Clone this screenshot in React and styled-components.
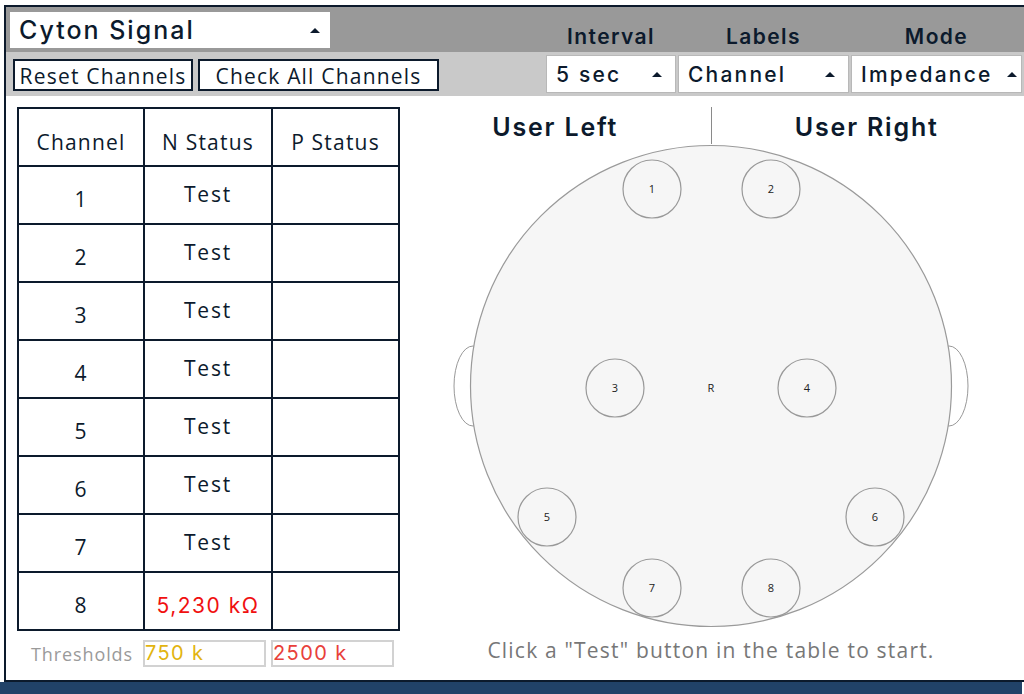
import React from 'react';
import styled, { createGlobalStyle } from 'styled-components';

const GlobalStyle = createGlobalStyle`
  html, body {
    margin: 0;
    padding: 0;
    background: #fff;
  }
  * { box-sizing: border-box; }
`;

const INK = '#0c1a2c';
const GEO = '"Inter", "Open Sans", sans-serif';
const HUMAN = '"Open Sans", "Noto Sans", sans-serif';

const Screen = styled.div`
  width: 1024px;
  height: 694px;
  padding: 5px 0 0 4px;
  display: flex;
  flex-direction: column;
  background: #fff;
  overflow: hidden;
`;

const Widget = styled.div`
  flex: 1;
  display: flex;
  flex-direction: column;
  border-top: 2px solid ${INK};
  border-left: 2px solid ${INK};
  border-bottom: 2px solid ${INK};
  min-height: 0;
`;

const BottomBar = styled.div`
  height: 12px;
  margin-left: -4px;
  width: 1022px;
  background: #214268;
`;

const TopBar = styled.div`
  height: 45px;
  background: #999999;
  display: flex;
  align-items: stretch;
  padding: 5px 2px 0 4px;
`;

const SubBar = styled.div`
  height: 44px;
  background: #c9c9c9;
  display: flex;
  align-items: flex-start;
  padding: 0 2px 0 7px;
`;

const MainSelect = styled.div`
  width: 320px;
  height: 36px;
  background: #fff;
  display: flex;
  align-items: center;
  justify-content: space-between;
  padding: 0 10px 0 9px;
  font-family: ${GEO};
  font-size: 25px;
  font-weight: 500;
  color: ${INK};
  letter-spacing: 2px;
`;

const Caret = styled.span`
  width: 0;
  height: 0;
  border-left: 5px solid transparent;
  border-right: 5px solid transparent;
  border-bottom: 5px solid ${INK};
  flex: none;
`;

const LabelRow = styled.div`
  margin-left: auto;
  display: flex;
  gap: 2px;
  align-items: flex-end;
  padding-bottom: 3px;
`;

const ColLabel = styled.div`
  width: ${p => p.$w}px;
  text-align: center;
  font-family: ${GEO};
  font-size: 21px;
  font-weight: 600;
  color: ${INK};
  letter-spacing: 1.4px;
`;

const ButtonRow = styled.div`
  display: flex;
  gap: 5px;
  margin-top: 7px;
`;

const Button = styled.div`
  height: 32px;
  width: ${p => p.$w}px;
  border: 2px solid ${INK};
  background: #fff;
  display: flex;
  align-items: center;
  justify-content: center;
  padding-top: 1px;
  font-family: ${HUMAN};
  font-size: 21px;
  color: ${INK};
  letter-spacing: 1.2px;
  white-space: nowrap;
`;

const SelectRow = styled.div`
  margin-left: auto;
  display: flex;
  gap: 2px;
  margin-top: 3px;
`;

const SmallSelect = styled.div`
  width: ${p => p.$w}px;
  height: 38px;
  background: #fff;
  border: 1px solid #b8b8b8;
  display: flex;
  align-items: center;
  justify-content: space-between;
  padding: 0 ${p => p.$pr ?? 13}px 0 9px;
  font-family: ${GEO};
  font-size: 21px;
  font-weight: 500;
  color: ${INK};
  letter-spacing: 2.2px;
`;

const Content = styled.div`
  flex: 1;
  display: flex;
  min-height: 0;
`;

const LeftPane = styled.div`
  padding: 11px 0 0 11px;
  width: 392px;
`;

const Table = styled.table`
  border-collapse: collapse;
  width: 381px;
  table-layout: fixed;
`;

const Cell = styled.td`
  border: 2px solid ${INK};
  height: 58px;
  padding: 0;
  text-align: center;
  vertical-align: middle;
  font-family: ${HUMAN};
  font-size: 21px;
  letter-spacing: 1.2px;
  color: ${p => (p.$alert ? '#f01010' : INK)};
  ${p => p.$alert && `font-family: ${GEO}; font-weight: 400; letter-spacing: 1.5px;`}
`;

const HeadCell = styled(Cell).attrs({ as: 'th' })`
  font-weight: 400;
  padding-top: 9px;
`;

const Num = styled.span`
  display: inline-block;
  transform: translateY(4px);
`;

const TestLabel = styled.span`
  display: inline-block;
  transform: translateY(-1px);
  letter-spacing: 1.8px;
`;

const ThresholdRow = styled.div`
  display: grid;
  grid-template-columns: 126px 128px 127px;
  align-items: center;
  margin-top: 9px;
`;

const ThresholdLabel = styled.div`
  font-family: ${HUMAN};
  font-size: 18px;
  color: #9a9a9a;
  text-align: right;
  padding-right: 10px;
  padding-top: 1px;
  letter-spacing: 0.9px;
`;

const ThresholdInput = styled.div`
  width: 123px;
  height: 27px;
  border: 2px solid #d2d2d2;
  font-family: ${GEO};
  font-size: 20px;
  line-height: 23px;
  letter-spacing: 1.4px;
  color: ${p => p.$color};
`;

const RightPane = styled.div`
  flex: 1;
  display: flex;
  flex-direction: column;
  align-items: center;
  padding-top: 11px;
`;

const SideHeader = styled.div`
  width: 622px;
  height: 37px;
  display: grid;
  grid-template-columns: 1fr 1px 1fr;
`;

const SideLabel = styled.div`
  font-family: ${GEO};
  font-size: 25px;
  font-weight: 600;
  color: ${INK};
  text-align: center;
  padding-top: 5px;
  letter-spacing: 1.8px;
`;

const Divider = styled.div`
  background: #8a8a8a;
`;

const HeadSvg = styled.svg`
  display: block;
  flex: none;
`;

const Hint = styled.div`
  margin-top: 6px;
  font-family: ${HUMAN};
  font-size: 21px;
  letter-spacing: 1.2px;
  color: #777;
`;

const electrodes = [
  { id: '1', x: -59, y: -197 },
  { id: '2', x: 60, y: -197 },
  { id: '3', x: -96, y: 2 },
  { id: '4', x: 96, y: 2 },
  { id: '5', x: -164, y: 131 },
  { id: '6', x: 164, y: 131 },
  { id: '7', x: -59, y: 202 },
  { id: '8', x: 60, y: 202 },
];

const rows = [1, 2, 3, 4, 5, 6, 7, 8];

const Head = () => {
  const cx = 260;
  const cy = 242;
  return (
    <HeadSvg width="520" height="486" viewBox="0 0 520 486">
      <ellipse cx={cx - 238} cy={cy} rx="19" ry="40" fill="#fff" stroke="#999" strokeWidth="1" />
      <ellipse cx={cx + 238} cy={cy} rx="19" ry="40" fill="#fff" stroke="#999" strokeWidth="1" />
      <circle cx={cx} cy={cy} r="240.5" fill="#f6f6f6" stroke="#9a9a9a" strokeWidth="1.2" />
      {electrodes.map(e => (
        <g key={e.id}>
          <circle cx={cx + e.x} cy={cy + e.y} r="29" fill="none" stroke="#999" strokeWidth="1.2" />
          <text
            x={cx + e.x}
            y={cy + e.y + 4}
            textAnchor="middle"
            fontFamily="Open Sans, sans-serif"
            fontSize="11"
            fill="#222"
          >
            {e.id}
          </text>
        </g>
      ))}
      <text x={cx} y={cy + 6} textAnchor="middle" fontFamily="Open Sans, sans-serif" fontSize="11" fill="#222">
        R
      </text>
    </HeadSvg>
  );
};

export default function App() {
  return (
    <>
      <GlobalStyle />
      <Screen>
        <Widget>
          <TopBar>
            <MainSelect>
              Cyton Signal
              <Caret />
            </MainSelect>
            <LabelRow>
              <ColLabel $w={130}>Interval</ColLabel>
              <ColLabel $w={171}>Labels</ColLabel>
              <ColLabel $w={171}>Mode</ColLabel>
            </LabelRow>
          </TopBar>
          <SubBar>
            <ButtonRow>
              <Button $w={180}>Reset Channels</Button>
              <Button $w={241}>Check All Channels</Button>
            </ButtonRow>
            <SelectRow>
              <SmallSelect $w={130}>
                5 sec
                <Caret />
              </SmallSelect>
              <SmallSelect $w={171}>
                Channel
                <Caret />
              </SmallSelect>
              <SmallSelect $w={171} $pr={4}>
                Impedance
                <Caret />
              </SmallSelect>
            </SelectRow>
          </SubBar>
          <Content>
            <LeftPane>
              <Table>
                <colgroup>
                  <col style={{ width: 126 }} />
                  <col style={{ width: 128 }} />
                  <col style={{ width: 127 }} />
                </colgroup>
                <thead>
                  <tr>
                    <HeadCell>Channel</HeadCell>
                    <HeadCell>N Status</HeadCell>
                    <HeadCell>P Status</HeadCell>
                  </tr>
                </thead>
                <tbody>
                  {rows.map(n => (
                    <tr key={n}>
                      <Cell>
                        <Num>{n}</Num>
                      </Cell>
                      {n === 8 ? (
                        <Cell $alert>
                          <Num>5,230 kΩ</Num>
                        </Cell>
                      ) : (
                        <Cell>
                          <TestLabel>Test</TestLabel>
                        </Cell>
                      )}
                      <Cell />
                    </tr>
                  ))}
                </tbody>
              </Table>
              <ThresholdRow>
                <ThresholdLabel>Thresholds</ThresholdLabel>
                <ThresholdInput $color="#e2b410">750 k</ThresholdInput>
                <ThresholdInput $color="#e8403a">2500 k</ThresholdInput>
              </ThresholdRow>
            </LeftPane>
            <RightPane>
              <SideHeader>
                <SideLabel>User Left</SideLabel>
                <Divider />
                <SideLabel>User Right</SideLabel>
              </SideHeader>
              <Head />
              <Hint>Click a "Test" button in the table to start.</Hint>
            </RightPane>
          </Content>
        </Widget>
        <BottomBar />
      </Screen>
    </>
  );
}
